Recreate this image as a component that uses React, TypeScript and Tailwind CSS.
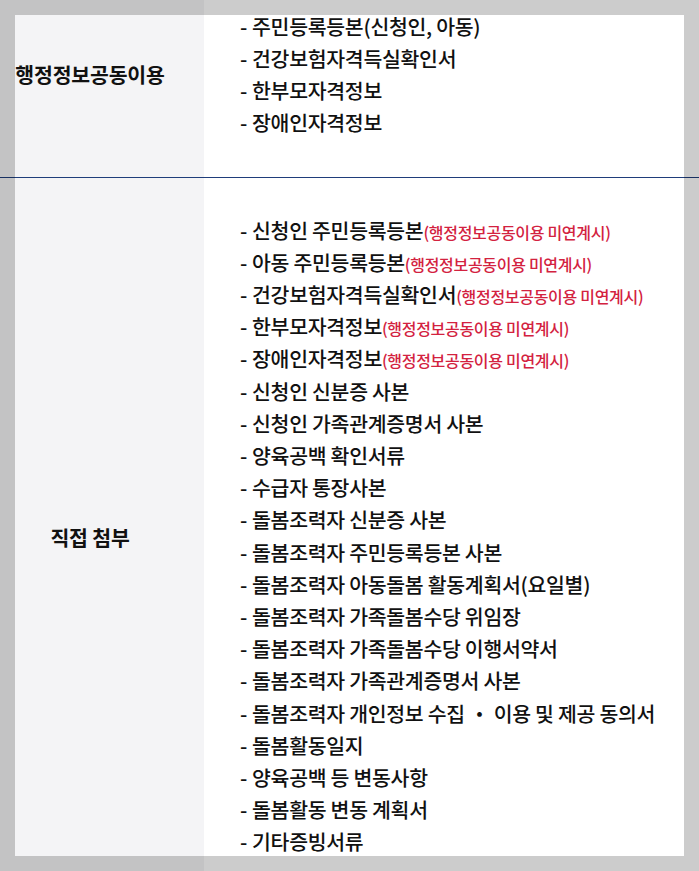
const note = '(행정정보공동이용 미연계시)';

type Doc = { text: string; note?: boolean };

const sharedDocs: Doc[] = [
  { text: '주민등록등본(신청인, 아동)' },
  { text: '건강보험자격득실확인서' },
  { text: '한부모자격정보' },
  { text: '장애인자격정보' },
];

const attachDocs: Doc[] = [
  { text: '신청인 주민등록등본', note: true },
  { text: '아동 주민등록등본', note: true },
  { text: '건강보험자격득실확인서', note: true },
  { text: '한부모자격정보', note: true },
  { text: '장애인자격정보', note: true },
  { text: '신청인 신분증 사본' },
  { text: '신청인 가족관계증명서 사본' },
  { text: '양육공백 확인서류' },
  { text: '수급자 통장사본' },
  { text: '돌봄조력자 신분증 사본' },
  { text: '돌봄조력자 주민등록등본 사본' },
  { text: '돌봄조력자 아동돌봄 활동계획서(요일별)' },
  { text: '돌봄조력자 가족돌봄수당 위임장' },
  { text: '돌봄조력자 가족돌봄수당 이행서약서' },
  { text: '돌봄조력자 가족관계증명서 사본' },
  { text: '돌봄조력자 개인정보 수집 ・ 이용 및 제공 동의서' },
  { text: '돌봄활동일지' },
  { text: '양육공백 등 변동사항' },
  { text: '돌봄활동 변동 계획서' },
  { text: '기타증빙서류' },
];

function DocRow({ label, docs, last }: { label: string; docs: Doc[]; last?: boolean }) {
  return (
    <div className={`flex ${last ? '' : 'border-b border-[#1f3d7a]'}`}>
      <div className="w-[204px] shrink-0 bg-[#f4f4f6] flex items-center justify-center pr-[24px]">
        <span className="text-[20.5px] font-bold text-[#111] tracking-[-0.2px]">{label}</span>
      </div>
      <ul className={`flex-1 pl-[36px] ${last ? 'pt-[36px] pb-[39px]' : 'py-[39px]'}`}>
        {docs.map((d) => (
          <li
            key={d.text}
            className={`${last ? 'h-[32.2px]' : 'h-[32px]'} flex items-center whitespace-nowrap text-[20.5px] font-medium text-[#111] tracking-[-0.3px]`}
          >
            <span className="mr-[5px]">-</span>
            <span>{d.text}</span>
            {d.note && <span className="text-[16px] text-[#d3223f] tracking-[-0.3px] pt-[3px]">{note}</span>}
          </li>
        ))}
      </ul>
    </div>
  );
}

export default function App() {
  return (
    <div
      className="relative w-[699px] h-[871px] overflow-hidden bg-white"
      style={{ fontFamily: '"Noto Sans CJK KR", "Noto Sans", sans-serif' }}
    >
      <div className="-mt-[29px]">
        <DocRow label="행정정보공동이용" docs={sharedDocs} />
        <DocRow label="직접 첨부" docs={attachDocs} last />
      </div>
      <div className="pointer-events-none absolute inset-0 border-[15px] border-black/20" />
    </div>
  );
}
